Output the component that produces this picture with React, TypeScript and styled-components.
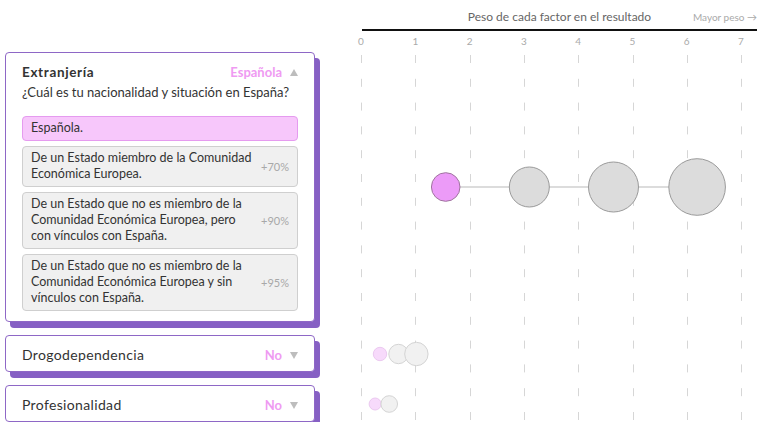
import React from "react";
import styled, { createGlobalStyle } from "styled-components";

const GlobalStyle = createGlobalStyle`
  html, body { margin: 0; padding: 0; background: #fff; }
  body { font-family: Lato, "Liberation Sans", sans-serif; color: #333; }
  * { box-sizing: border-box; }
`;

const UNIT = 54.3;
const X0 = 11;
const xOf = (v: number) => X0 + UNIT * v;
const CHART_W = 420;

const Page = styled.div`
  display: grid;
  grid-template-columns: 310px ${CHART_W}px;
  grid-template-rows: 39px auto auto auto;
  column-gap: 35px;
  row-gap: 13px;
  padding-left: 5px;
  width: 778px;
`;

const Header = styled.header`
  grid-column: 2;
  grid-row: 1;
  height: 52px;
  padding: 9px 13px 0 12px;
  display: flex;
  flex-direction: column;
`;

const TitleRow = styled.div`
  display: grid;
  grid-template-columns: 1fr auto 1fr;
  align-items: center;
  height: 16px;
`;

const ChartTitle = styled.div`
  grid-column: 2;
  font-size: 12px;
  line-height: 16px;
  color: #666;
  white-space: nowrap;
`;

const MoreHint = styled.div`
  grid-column: 3;
  justify-self: end;
  font-size: 10px;
  line-height: 16px;
  color: #aaa;
  white-space: nowrap;
`;

const AxisLine = styled.div`
  margin-top: 4px;
  height: 2px;
  background: #111;
`;

const AxisLabels = styled.div`
  margin-top: 4px;
  margin-left: -6px;
  width: 390px;
  display: flex;
  justify-content: space-between;
`;

const AxisLabel = styled.span`
  width: 10px;
  text-align: center;
  font-size: 10px;
  line-height: 12px;
  color: #aaa;
`;

const Card = styled.section<{ $row: number; $open?: boolean }>`
  grid-column: 1;
  grid-row: ${(p) => p.$row};
  background: #fff;
  border: 1px solid #8e67c6;
  border-radius: 4px;
  box-shadow: 5px 6px 0 #8660c4;
  padding: ${(p) => (p.$open ? "9px 16px 10px" : "9px 16px 6px")};
  position: relative;
  z-index: 1;
`;

const CardHead = styled.div`
  display: flex;
  align-items: center;
  height: 20px;
`;

const CardTitle = styled.h2<{ $open?: boolean }>`
  margin: 0;
  flex: 1;
  font-size: ${(p) => (p.$open ? "13.5px" : "14px")};
  font-weight: ${(p) => (p.$open ? 700 : 400)};
  letter-spacing: ${(p) => (p.$open ? "0.65px" : "0.35px")};
  line-height: 20px;
  color: #333;
`;

const CardValue = styled.span`
  font-size: 13px;
  font-weight: 700;
  color: #ef9af2;
  line-height: 20px;
`;

const Caret = styled.span<{ $up?: boolean }>`
  margin-left: 8px;
  width: 0;
  height: 0;
  border-left: 4px solid transparent;
  border-right: 4px solid transparent;
  ${(p) =>
    p.$up
      ? "border-bottom: 7px solid #bdbdbd;"
      : "border-top: 7px solid #bdbdbd;"}
`;

const Question = styled.p`
  margin: 0;
  font-size: 13px;
  line-height: 20px;
  color: #333;
`;

const Options = styled.div`
  margin-top: 14px;
  display: flex;
  flex-direction: column;
  gap: 5px;
`;

const Option = styled.div<{ $selected?: boolean }>`
  display: flex;
  align-items: center;
  justify-content: space-between;
  padding: 3px 8px 4px;
  border: 1px solid ${(p) => (p.$selected ? "#e59bef" : "#cfcfcf")};
  border-radius: 4px;
  background: ${(p) => (p.$selected ? "#f7c7fb" : "#f0f0f0")};
`;

const OptionText = styled.span`
  width: 224px;
  font-size: 12.5px;
  line-height: 16px;
  color: #333;
`;

const Percent = styled.span`
  font-size: 11px;
  color: #a8a8a8;
`;

const GridLines = styled.svg`
  grid-column: 2;
  grid-row: 2 / 5;
  width: ${CHART_W}px;
  height: 100%;
  display: block;
  z-index: 0;
`;

const ChartRow = styled.svg<{ $row: number }>`
  grid-column: 2;
  grid-row: ${(p) => p.$row};
  align-self: center;
  display: block;
  z-index: 1;
  overflow: visible;
`;

type Bubble = { v: number; r: number; pink?: boolean };

const rows: { row: number; h: number; strong: boolean; bubbles: Bubble[] }[] = [
  {
    row: 2,
    h: 60,
    strong: true,
    bubbles: [
      { v: 1.56, r: 14.3, pink: true },
      { v: 3.1, r: 20 },
      { v: 4.65, r: 25 },
      { v: 6.19, r: 28.3 },
    ],
  },
  {
    row: 3,
    h: 30,
    strong: false,
    bubbles: [
      { v: 0.35, r: 6.7, pink: true },
      { v: 0.69, r: 9.7 },
      { v: 1.02, r: 11.7 },
    ],
  },
  {
    row: 4,
    h: 30,
    strong: false,
    bubbles: [
      { v: 0.26, r: 6, pink: true },
      { v: 0.52, r: 8.3 },
    ],
  },
];

const options = [
  { text: "Española.", pct: "", selected: true },
  { text: "De un Estado miembro de la Comunidad Económica Europea.", pct: "+70%" },
  {
    text: "De un Estado que no es miembro de la Comunidad Económica Europea, pero con vínculos con España.",
    pct: "+90%",
  },
  {
    text: "De un Estado que no es miembro de la Comunidad Económica Europea y sin vínculos con España.",
    pct: "+95%",
  },
];

export default function App() {
  return (
    <>
      <GlobalStyle />
      <Page>
        <Header>
          <TitleRow>
            <ChartTitle>Peso de cada factor en el resultado</ChartTitle>
            <MoreHint>Mayor peso →</MoreHint>
          </TitleRow>
          <AxisLine />
          <AxisLabels>
            {[0, 1, 2, 3, 4, 5, 6, 7].map((n) => (
              <AxisLabel key={n}>{n}</AxisLabel>
            ))}
          </AxisLabels>
        </Header>

        <GridLines>
          {[0, 1, 2, 3, 4, 5, 6, 7].map((n) => (
            <line
              key={n}
              x1={Math.round(xOf(n)) + 0.5}
              x2={Math.round(xOf(n)) + 0.5}
              y1={0}
              y2="100%"
              stroke="#d6d6d6"
              strokeWidth={1}
              strokeDasharray="8 15.8"
              strokeDashoffset={20.8}
            />
          ))}
        </GridLines>

        {rows.map((r) => {
          const cy = r.h / 2;
          const first = r.bubbles[0];
          const last = r.bubbles[r.bubbles.length - 1];
          return (
            <ChartRow key={r.row} $row={r.row} width={CHART_W} height={r.h}>
              {r.strong && (
                <line
                  x1={xOf(first.v)}
                  x2={xOf(last.v)}
                  y1={cy}
                  y2={cy}
                  stroke="#dcdcdc"
                  strokeWidth={2}
                />
              )}
              {r.bubbles.map((b, i) => (
                <circle
                  key={i}
                  cx={xOf(b.v)}
                  cy={cy}
                  r={b.r}
                  fill={
                    b.pink
                      ? r.strong
                        ? "#ec9bf8"
                        : "#f7dafb"
                      : r.strong
                      ? "#dcdcdc"
                      : "#f1f1f1"
                  }
                  stroke={
                    b.pink
                      ? r.strong
                        ? "#a0749f"
                        : "#ebc9f0"
                      : r.strong
                      ? "#9a9a9a"
                      : "#d4d4d4"
                  }
                  strokeWidth={1}
                />
              ))}
            </ChartRow>
          );
        })}

        <Card $row={2} $open>
          <CardHead>
            <CardTitle $open>Extranjería</CardTitle>
            <CardValue>Española</CardValue>
            <Caret $up />
          </CardHead>
          <Question>¿Cuál es tu nacionalidad y situación en España?</Question>
          <Options>
            {options.map((o, i) => (
              <Option key={i} $selected={o.selected}>
                <OptionText>{o.text}</OptionText>
                {o.pct && <Percent>{o.pct}</Percent>}
              </Option>
            ))}
          </Options>
        </Card>

        <Card $row={3}>
          <CardHead>
            <CardTitle>Drogodependencia</CardTitle>
            <CardValue>No</CardValue>
            <Caret />
          </CardHead>
        </Card>

        <Card $row={4}>
          <CardHead>
            <CardTitle>Profesionalidad</CardTitle>
            <CardValue>No</CardValue>
            <Caret />
          </CardHead>
        </Card>
      </Page>
    </>
  );
}
